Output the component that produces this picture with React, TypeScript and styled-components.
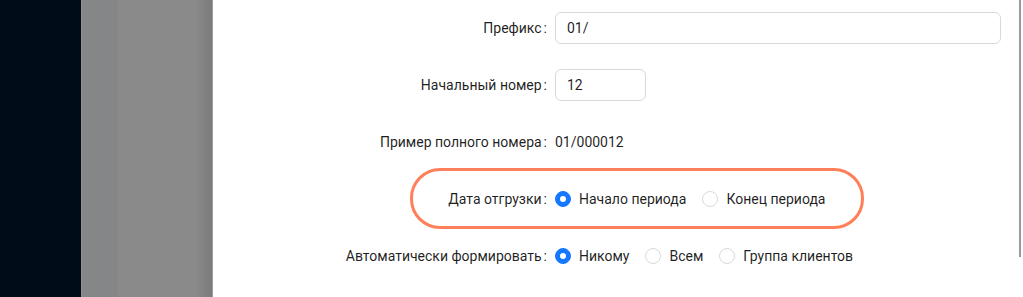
import React from "react";
import styled, { createGlobalStyle } from "styled-components";

const Global = createGlobalStyle`
  html, body { margin: 0; padding: 0; background: #fff; }
  body { font-family: Roboto, "Noto Sans", Arial, sans-serif; font-size: 14px; color: rgba(0,0,0,0.88); }
  * { box-sizing: border-box; }
`;

const Screen = styled.div`
  display: flex;
  width: 1023px;
  height: 297px;
  overflow: hidden;
`;

const Sider = styled.div`
  width: 81px;
  flex: none;
  background: #000d19;
`;

const Masked = styled.div`
  width: 131px;
  flex: none;
  display: flex;
  border-left: 1px solid #8e9093;
`;

const MaskStrip = styled.div<{ $w: number; $bg: string }>`
  width: ${(p) => p.$w}px;
  flex: none;
  background: ${(p) => p.$bg};
`;

const MaskRest = styled.div`
  flex: 1;
  background: linear-gradient(90deg, #8a8a8a 0%, #8a8a8a 82%, #7b7b7b 100%);
`;

const Drawer = styled.div`
  position: relative;
  flex: 1;
  background: #fff;
  border-left: 1px solid #9c9c9c;
  display: flex;
`;

const Form = styled.div`
  flex: 1;
  display: flex;
  flex-direction: column;
  gap: 25px;
  padding-top: 12px;
  padding-right: 22px;
`;

const Row = styled.div`
  display: flex;
  align-items: center;
  height: 32px;
`;

const Label = styled.div`
  width: 342px;
  flex: none;
  text-align: right;
  white-space: nowrap;
  &::after {
    content: ":";
    margin: 0 8px 0 2px;
  }
`;

const Control = styled.div`
  flex: 1;
  display: flex;
  align-items: center;
`;

const Input = styled.div<{ $w?: number }>`
  height: 32px;
  width: ${(p) => (p.$w ? `${p.$w}px` : "100%")};
  border: 1px solid #d9d9d9;
  border-radius: 6px;
  padding: 4px 11px;
  line-height: 22px;
  background: #fff;
`;

const Text = styled.span`
  line-height: 22px;
`;

const RadioItem = styled.label`
  display: inline-flex;
  align-items: center;
  margin-right: 8px;
`;

const RadioDot = styled.span<{ $on?: boolean }>`
  width: 16px;
  height: 16px;
  border-radius: 50%;
  flex: none;
  display: inline-flex;
  align-items: center;
  justify-content: center;
  border: 1px solid ${(p) => (p.$on ? "#1677ff" : "#d9d9d9")};
  background: ${(p) => (p.$on ? "#1677ff" : "#fff")};
  &::after {
    content: "";
    width: 6px;
    height: 6px;
    border-radius: 50%;
    background: #fff;
    display: ${(p) => (p.$on ? "block" : "none")};
  }
`;

const RadioText = styled.span`
  padding: 0 8px;
  line-height: 22px;
`;

const Highlight = styled.div`
  position: absolute;
  left: 197px;
  top: 168px;
  width: 454px;
  height: 61px;
  border: 3px solid #ff7f5b;
  border-radius: 30px;
  pointer-events: none;
`;

const Scrollbar = styled.div`
  position: absolute;
  right: 2px;
  top: 0;
  width: 2px;
  height: 257px;
  background: #9a9a9a;
`;

const Radio = ({ on, children }: { on?: boolean; children: React.ReactNode }) => (
  <RadioItem>
    <RadioDot $on={on} />
    <RadioText>{children}</RadioText>
  </RadioItem>
);

export default function App() {
  return (
    <>
      <Global />
      <Screen>
        <Sider />
        <Masked>
          <MaskStrip $w={36} $bg="#858687" />
          <MaskRest />
        </Masked>
        <Drawer>
          <Form>
            <Row>
              <Label>Префикс</Label>
              <Control>
                <Input>01/</Input>
              </Control>
            </Row>
            <Row>
              <Label>Начальный номер</Label>
              <Control>
                <Input $w={91}>12</Input>
              </Control>
            </Row>
            <Row>
              <Label>Пример полного номера</Label>
              <Control>
                <Text>01/000012</Text>
              </Control>
            </Row>
            <Row>
              <Label>Дата отгрузки</Label>
              <Control>
                <Radio on>Начало периода</Radio>
                <Radio>Конец периода</Radio>
              </Control>
            </Row>
            <Row>
              <Label>Автоматически формировать</Label>
              <Control>
                <Radio on>Никому</Radio>
                <Radio>Всем</Radio>
                <Radio>Группа клиентов</Radio>
              </Control>
            </Row>
          </Form>
          <Highlight />
          <Scrollbar />
        </Drawer>
      </Screen>
    </>
  );
}
